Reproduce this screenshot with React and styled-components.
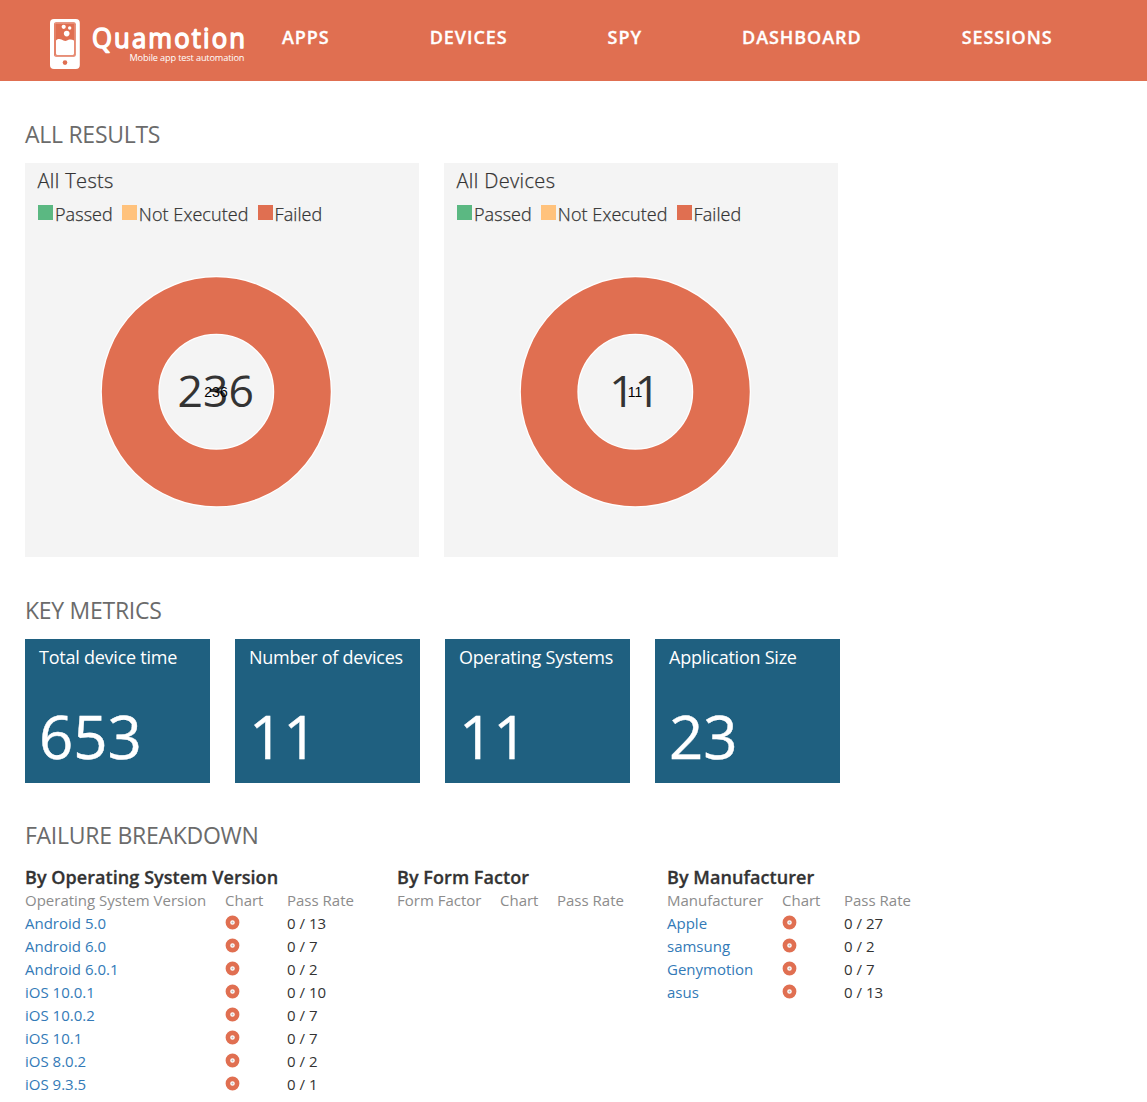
import React from "react";
import styled, { createGlobalStyle } from "styled-components";

const GlobalStyle = createGlobalStyle`
  * { box-sizing: border-box; }
  body {
    margin: 0;
    background: #fff;
    color: #333;
    font-family: "Open Sans", "Noto Sans", sans-serif;
  }
`;

const Header = styled.header`
  height: 81px;
  background: #e06f51;
  display: flex;
  padding-left: 50px;
`;

const Logo = styled.svg`
  display: block;
  width: 200px;
  height: 81px;
  flex: none;
`;

const Nav = styled.nav`
  display: flex;
  margin-left: 32px;
  gap: 100px;
  padding-top: 25px;
`;

const NavItem = styled.a`
  color: #fff;
  font-size: 18px;
  line-height: 25px;
  font-weight: 600;
  letter-spacing: 0.94px;
  -webkit-text-stroke: 0.3px #fff;
  white-space: nowrap;
`;

const Main = styled.main`
  padding: 37px 25px 0;
`;

const Section = styled.section`
  height: ${(p) => p.$height}px;
`;

const Heading = styled.h2`
  margin: 0 0 13px;
  font-size: 23px;
  line-height: 32px;
  font-weight: 400;
  letter-spacing: -0.27px;
  color: #6b6b6b;
`;

const Row = styled.div`
  display: flex;
  gap: 25px;
`;

const Panel = styled.article`
  width: 394px;
  height: 394px;
  background: #f4f4f4;
  padding-top: 4px;
`;

const PanelTitle = styled.h3`
  margin: 0 0 0 12.5px;
  font-size: 20px;
  line-height: 28px;
  font-weight: 300;
  letter-spacing: 0.36px;
  -webkit-text-stroke: 0.25px #333;
`;

const Legend = styled.div`
  display: flex;
  margin: 6px 0 0 13px;
  height: 26px;
`;

const LegendItem = styled.span`
  display: flex;
  gap: 2px;
  margin-right: 9px;
  font-size: 18px;
  line-height: 26px;
  font-weight: 300;
  letter-spacing: 0.07px;
  -webkit-text-stroke: 0.25px #333;
`;

const Swatch = styled.i`
  width: 15px;
  height: 15px;
  margin-top: 4px;
  background: ${(p) => p.$color};
`;

const Donut = styled.svg`
  display: block;
  margin: 47px 0 0 73px;
`;

const Metric = styled.article`
  width: 185px;
  height: 144px;
  background: #1f6080;
  color: #fff;
  padding: 6px 0 0 14px;
`;

const MetricLabel = styled.div`
  font-size: 18px;
  line-height: 25px;
  letter-spacing: -0.24px;
  white-space: nowrap;
`;

const MetricValue = styled.div`
  margin-top: 25px;
  font-size: 60px;
  line-height: 82px;
  -webkit-text-stroke: 0.4px #fff;
`;

const Breakdown = styled.div`
  display: flex;
  gap: 43px;
  padding-top: 1px;
`;

const Group = styled.article`
  width: ${(p) => p.$width}px;
`;

const GroupTitle = styled.h3`
  margin: 0;
  font-size: 18px;
  line-height: 24px;
  font-weight: 600;
  letter-spacing: 0.06px;
  -webkit-text-stroke: 0.3px #333;
  white-space: nowrap;
`;

const TableRow = styled.div`
  display: grid;
  grid-template-columns: ${(p) => p.$columns};
  height: 23px;
  font-size: 15px;
  line-height: 23px;
  color: ${(p) => (p.$head ? "#8c8c8c" : "#333")};
  white-space: nowrap;
`;

const Link = styled.a`
  color: #337ab7;
`;

const MiniDonut = styled.svg`
  display: block;
  margin-top: 3px;
`;

const legend = [
  ["Passed", "#5bb882"],
  ["Not Executed", "#ffc27c"],
  ["Failed", "#e06f51"],
];

const metrics = [
  ["Total device time", "653"],
  ["Number of devices", "11"],
  ["Operating Systems", "11"],
  ["Application Size", "23"],
];

const groups = [
  {
    title: "By Operating System Version",
    width: 329,
    columns: "200px 62px 1fr",
    label: "Operating System Version",
    rows: [
      ["Android 5.0", 13],
      ["Android 6.0", 7],
      ["Android 6.0.1", 2],
      ["iOS 10.0.1", 10],
      ["iOS 10.0.2", 7],
      ["iOS 10.1", 7],
      ["iOS 8.0.2", 2],
      ["iOS 9.3.5", 1],
    ],
  },
  {
    title: "By Form Factor",
    width: 227,
    columns: "103px 57px 1fr",
    label: "Form Factor",
    rows: [],
  },
  {
    title: "By Manufacturer",
    width: 245,
    columns: "115px 62px 1fr",
    label: "Manufacturer",
    rows: [
      ["Apple", 27],
      ["samsung", 2],
      ["Genymotion", 7],
      ["asus", 13],
    ],
  },
];

function Brand() {
  return (
    <Logo viewBox="0 0 200 81" role="img" aria-label="Quamotion">
      <rect x="0" y="19" width="29.8" height="50" rx="4" fill="#fff" />
      <rect x="4" y="22.3" width="21.8" height="34.4" rx="2" fill="#e06f51" />
      <rect x="5" y="23.3" width="19.8" height="32.4" rx="1.2" fill="none" stroke="#fff" strokeWidth="0.5" strokeOpacity="0.55" />
      <path d="M6 40.5C7.5 39 9.5 38.6 11.5 39.6C14 41.2 16.5 41.4 18.5 39.8C20.5 39.2 22.5 39.6 24 40.5V53.5Q24 55 22.5 55H7.5Q6 55 6 53.5Z" fill="#fff" />
      <circle cx="13.7" cy="26.8" r="2.1" fill="#fff" />
      <circle cx="19.7" cy="28" r="1.7" fill="#fff" />
      <circle cx="16.7" cy="33.6" r="2.8" fill="#fff" />
      <circle cx="15" cy="62.6" r="2.3" fill="#e06f51" />
      <text
        transform="translate(42 48.3) scale(0.95 1)" fill="#fff" stroke="#fff" strokeWidth="1.5" strokeLinejoin="round"
        fontFamily="Open Sans, sans-serif" fontSize="27" fontWeight="400" textLength="161"
      >
        Quamotion
      </text>
      <text
        x="79.5" y="61" fill="#fff" fontFamily="Open Sans, sans-serif" fontSize="9.2" textLength="115"
      >
        Mobile app test automation
      </text>
    </Logo>
  );
}

function ResultPanel({ title, total }) {
  return (
    <Panel>
      <PanelTitle>{title}</PanelTitle>
      <Legend>
        {legend.map(([name, color]) => (
          <LegendItem key={name}>
            <Swatch $color={color} />
            {name}
          </LegendItem>
        ))}
      </Legend>
      <Donut width="236" height="236" viewBox="0 0 236 236">
        <circle cx="118.3" cy="117.8" r="86.2" fill="none" stroke="#fff" strokeWidth="59" />
        <circle cx="118.3" cy="117.8" r="86.2" fill="none" stroke="#e06f51" strokeWidth="56.5" />
        <text x="117.7" y="133" textAnchor="middle" fontSize="44.5" fill="#333">{total}</text>
        <text x="118" y="123" textAnchor="middle" fontFamily="Liberation Sans, sans-serif" fontSize="14" fill="#000">
          {total}
        </text>
      </Donut>
    </Panel>
  );
}

function BreakdownGroup({ group }) {
  return (
    <Group $width={group.width}>
      <GroupTitle>{group.title}</GroupTitle>
      <TableRow $head $columns={group.columns}>
        <span>{group.label}</span>
        <span>Chart</span>
        <span>Pass Rate</span>
      </TableRow>
      {group.rows.map(([name, total]) => (
        <TableRow key={name} $columns={group.columns}>
          <Link>{name}</Link>
          <MiniDonut width="15" height="15" viewBox="0 0 15 15">
            <circle cx="7.5" cy="7.5" r="4.6" fill="none" stroke="#e06f51" strokeWidth="4.6" />
            <circle cx="7.5" cy="7.5" r="1" fill="#bcbcbc" />
          </MiniDonut>
          <span>0 / {total}</span>
        </TableRow>
      ))}
    </Group>
  );
}

export default function App() {
  return (
    <>
      <GlobalStyle />
      <Header>
        <Brand />
        <Nav>
          <NavItem>APPS</NavItem>
          <NavItem>DEVICES</NavItem>
          <NavItem>SPY</NavItem>
          <NavItem>DASHBOARD</NavItem>
          <NavItem>SESSIONS</NavItem>
        </Nav>
      </Header>
      <Main>
        <Section $height={476}>
          <Heading>ALL RESULTS</Heading>
          <Row>
            <ResultPanel title="All Tests" total="236" />
            <ResultPanel title="All Devices" total="11" />
          </Row>
        </Section>
        <Section $height={225}>
          <Heading>KEY METRICS</Heading>
          <Row>
            {metrics.map(([label, value]) => (
              <Metric key={label}>
                <MetricLabel>{label}</MetricLabel>
                <MetricValue>{value}</MetricValue>
              </Metric>
            ))}
          </Row>
        </Section>
        <Section $height={275}>
          <Heading>FAILURE BREAKDOWN</Heading>
          <Breakdown>
            {groups.map((group) => (
              <BreakdownGroup key={group.title} group={group} />
            ))}
          </Breakdown>
        </Section>
      </Main>
    </>
  );
}
